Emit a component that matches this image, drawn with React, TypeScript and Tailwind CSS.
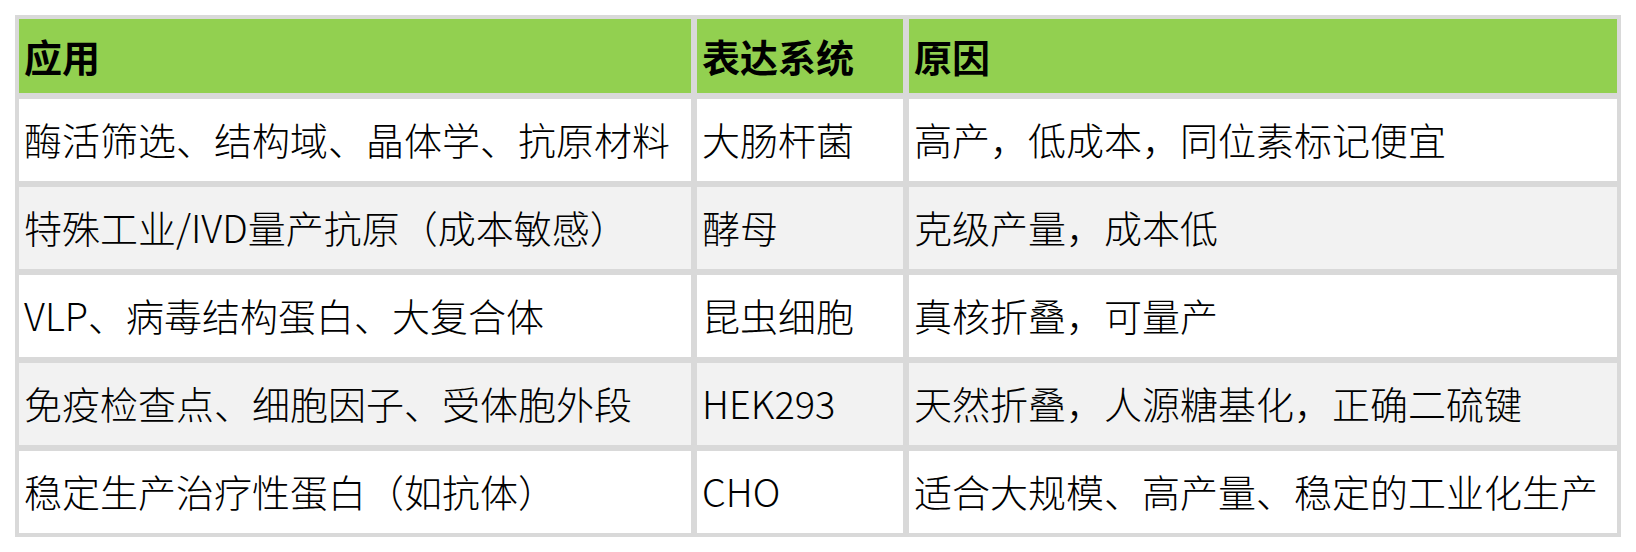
import React from "react";

const header = ["应用", "表达系统", "原因"];
const rows: [string, string, string][] = [
  ["酶活筛选、结构域、晶体学、抗原材料", "大肠杆菌", "高产，低成本，同位素标记便宜"],
  ["特殊工业/IVD量产抗原（成本敏感）", "酵母", "克级产量，成本低"],
  ["VLP、病毒结构蛋白、大复合体", "昆虫细胞", "真核折叠，可量产"],
  ["免疫检查点、细胞因子、受体胞外段", "HEK293", "天然折叠，人源糖基化，正确二硫键"],
  ["稳定生产治疗性蛋白（如抗体）", "CHO", "适合大规模、高产量、稳定的工业化生产"],
];

export default function App() {
  return (
    <div
      className="w-[1636px] h-[552px] bg-white p-[15px] text-black"
      style={{ fontFamily: '"Noto Sans CJK SC", "Noto Sans", sans-serif' }}
    >
      <div className="grid grid-cols-[672px_206px_708px] grid-rows-[74px_repeat(5,82px)] gap-[6px] bg-[#d9d9d9] p-[4px]">
        {header.map((h) => (
          <div key={h} className="flex items-center bg-[#92d050] px-[5px] text-[38px] font-bold leading-none">
            {h}
          </div>
        ))}
        {rows.map((r, i) =>
          r.map((c, j) => (
            <div
              key={`${i}-${j}`}
              className={`flex items-center px-[5px] pb-[3px] text-[38px] font-light leading-none ${
                i % 2 === 1 ? "bg-[#f2f2f2]" : "bg-white"
              }`}
            >
              {c}
            </div>
          ))
        )}
      </div>
    </div>
  );
}
